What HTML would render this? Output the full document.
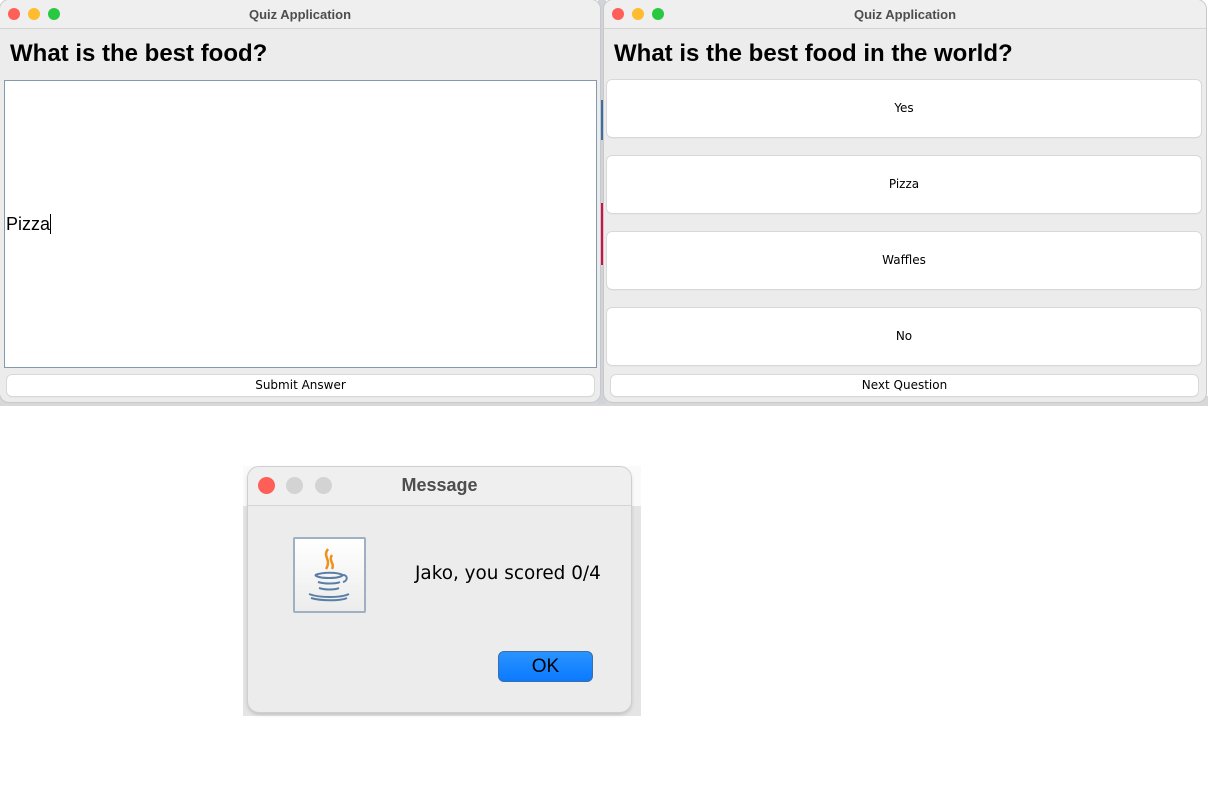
<!DOCTYPE html>
<html><head><style>
*{margin:0;padding:0;box-sizing:border-box}
body{width:1208px;height:810px;background:#fff;position:relative;font-family:"Liberation Sans",sans-serif;overflow:hidden}
.abs{position:absolute}
.win{position:absolute;background:#ececec;border-radius:9px;overflow:hidden;box-shadow:0 0 0 1px #c8c8c8}
.tb{position:absolute;left:0;right:0;top:0;height:29px;background:#efefef;border-bottom:1px solid #d4d4d4;text-align:center;font-weight:bold;font-size:13px;color:#4d4d4d;line-height:29px}
.dot{position:absolute;width:12px;height:12px;border-radius:50%;top:8px}
h1{position:absolute;font-size:24px;font-weight:bold;color:#000}
.btn{position:absolute;background:#fff;border-radius:5px;box-shadow:0 0 0 1px #d8d8d8,0 1px 1px #c8c8c8;text-align:center;font-family:"DejaVu Sans",sans-serif;font-size:12px;color:#000}
</style></head><body>
<div class="abs" style="left:0;top:396px;width:1208px;height:10px;background:#d8d8d8"></div>
<div class="abs" style="left:598px;top:0;width:8px;height:404px;background:#d0d4da"></div>
<div class="abs" style="left:598px;top:203px;width:6px;height:62px;background:#d0104a"></div>
<div class="abs" style="left:598px;top:100px;width:6px;height:40px;background:#3a6ea5"></div>

<div class="win" style="left:0;top:0;width:600px;height:402px">
<div class="tb">Quiz Application</div>
<div class="dot" style="left:8px;background:#fe5f57"></div>
<div class="dot" style="left:28px;background:#febc2e"></div>
<div class="dot" style="left:48px;background:#28c840"></div>
<h1 style="left:10px;top:40px">What is the best food?</h1>
<div class="abs" style="left:4px;top:80px;width:593px;height:288px;background:#fff;border:1px solid #8299b0"></div>
<div class="abs" style="left:6px;top:214px;font-size:18px;color:#000">Pizza<span style="display:inline-block;width:1px;height:20px;background:#000;vertical-align:-4px"></span></div>
<div class="btn" style="left:7px;top:375px;width:587px;height:21px;line-height:20px">Submit Answer</div>
</div>

<div class="win" style="left:604px;top:0;width:602px;height:402px">
<div class="tb">Quiz Application</div>
<div class="dot" style="left:8px;background:#fe5f57"></div>
<div class="dot" style="left:28px;background:#febc2e"></div>
<div class="dot" style="left:48px;background:#28c840"></div>
<h1 style="left:10px;top:40px">What is the best food in the world?</h1>
<div class="btn" style="left:3px;top:80px;width:594px;height:57px;line-height:57px">Yes</div>
<div class="btn" style="left:3px;top:156px;width:594px;height:57px;line-height:57px">Pizza</div>
<div class="btn" style="left:3px;top:232px;width:594px;height:57px;line-height:57px">Waffles</div>
<div class="btn" style="left:3px;top:308px;width:594px;height:57px;line-height:57px">No</div>
<div class="btn" style="left:7px;top:375px;width:587px;height:21px;line-height:20px">Next Question</div>
</div>

<div class="abs" style="left:243px;top:466px;width:398px;height:250px;background:#e4e4e4"></div>
<div class="abs" style="left:243px;top:466px;width:398px;height:40px;background:#fafafa"></div>
<div class="win" style="left:248px;top:467px;width:383px;height:245px;border-radius:11px;box-shadow:0 0 0 1px #cfcfcf,0 2px 4px rgba(0,0,0,.2)">
<div class="tb" style="height:39px;line-height:37px;font-size:18px">Message</div>
<div class="dot" style="left:10px;top:10px;width:17px;height:17px;background:#fe5f57"></div>
<div class="dot" style="left:38px;top:10px;width:17px;height:17px;background:#d3d3d3"></div>
<div class="dot" style="left:67px;top:10px;width:17px;height:17px;background:#d3d3d3"></div>
<div class="abs" style="left:45px;top:70px;width:73px;height:76px;background:linear-gradient(#fff,#ececec);border:2px solid #9fb0c2;border-radius:2px">
<svg width="69" height="72" viewBox="0 0 69 72">
<path d="M33 10c-6 8 4 10-2 20M37 16c-4 6 3 8 0 14" stroke="#f0901a" stroke-width="2.5" fill="none"/>
<path d="M20 36c8-3 22-3 28 0M20 36c4 4 24 4 28 0M48 36c5 0 5 6 0 7" stroke="#5a7fa6" stroke-width="2" fill="none"/>
<path d="M23 43c6 2 18 2 22 0M24 49c6 2 16 2 20 0M14 55c10 4 32 4 40 0M16 59c10 3 30 3 36 0" stroke="#5a7fa6" stroke-width="2" fill="none"/>
</svg></div>
<div class="abs" style="left:167px;top:96px;font-family:'DejaVu Sans',sans-serif;font-size:18.4px;color:#000">Jako, you scored 0/4</div>
<div class="abs" style="left:250px;top:184px;width:95px;height:31px;background:linear-gradient(#2a93ff,#0a7aff);border:1px solid #3d6ea8;border-radius:6px;color:#000;font-size:19px;text-align:center;line-height:29px">OK</div>
</div>
</body></html>
